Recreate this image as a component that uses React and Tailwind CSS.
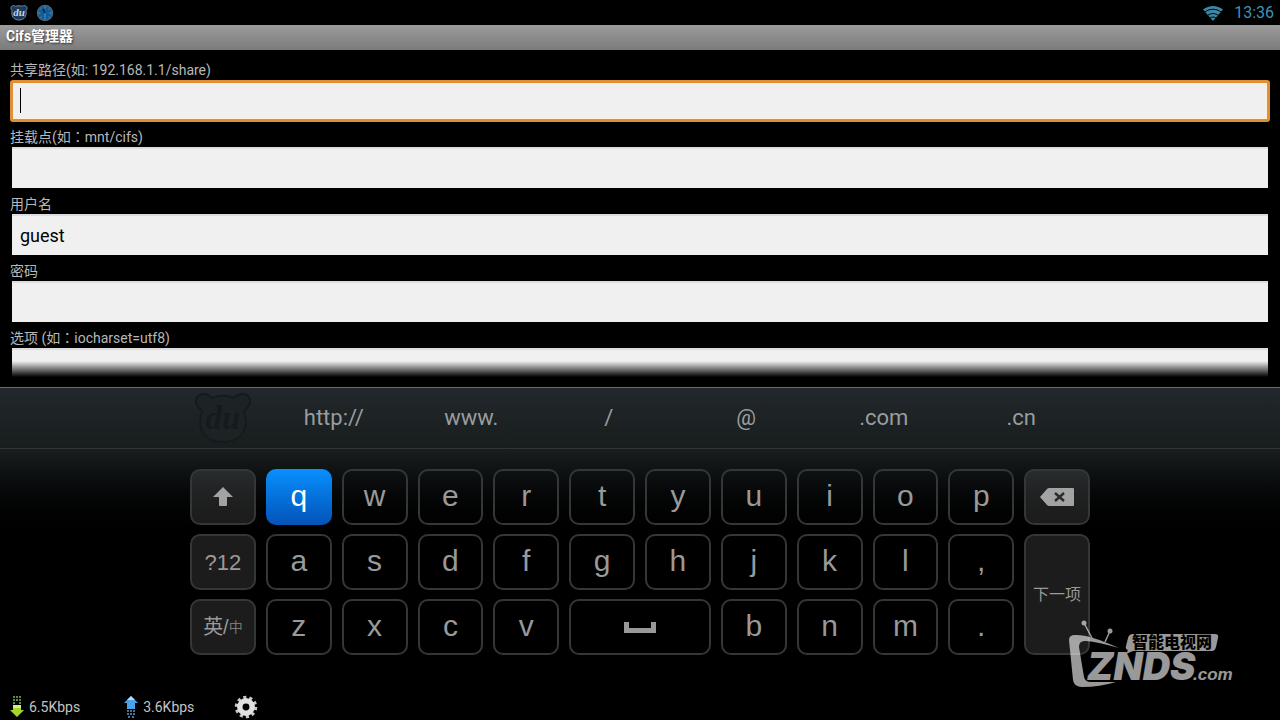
import React, { useState } from 'react';
import clsx from 'clsx';

// full-width colon, centred in its cell as on the device
const Colon = () => <span className="font-['Noto_Sans_CJK_TC',sans-serif] leading-none">：</span>;

const FIELDS = [
  { id: 'share', label: '共享路径(如: 192.168.1.1/share)', value: '' },
  { id: 'mount', label: <>挂载点(如<Colon />mnt/cifs)</>, value: '' },
  { id: 'user', label: '用户名', value: 'guest' },
  { id: 'password', label: '密码', value: '' },
  { id: 'options', label: <>选项 (如<Colon />iocharset=utf8)</>, value: '' },
];

const SHORTCUTS = ['http://', 'www.', '/', '@', '.com', '.cn'];

const ROW_1 = ['q', 'w', 'e', 'r', 't', 'y', 'u', 'i', 'o', 'p'];
const ROW_2 = ['a', 's', 'd', 'f', 'g', 'h', 'j', 'k', 'l', ','];
const ROW_3_LEFT = ['z', 'x', 'c', 'v'];
const ROW_3_RIGHT = ['b', 'n', 'm', '.'];

const BearIcon = () => (
  <svg width="18" height="16" viewBox="0 0 18 16">
    <path
      d="M1 3.5C.5 1 3.5-.2 5.5 1.2 8 .7 10 .7 12.5 1.2 14.5-.2 17.5 1 17 3.5c-.1 1-.6 1.5-1 2 1 5.500-1.500 9.500-7 9.500S1 11 2 5.500C1.500 5 1.100 4.500 1 3.500z"
      fill="#1d3a5c"
      stroke="#6d8ba6"
      strokeWidth="1"
    />
    <text x="9" y="11" textAnchor="middle" fontSize="11" fontWeight="bold" fontStyle="italic" fontFamily="Liberation Serif, serif" fill="#c3d5e4">du</text>
  </svg>
);

const ClockIcon = () => (
  <svg width="18" height="18" viewBox="0 0 18 18">
    <circle cx="9" cy="9" r="7.500" fill="#125c98" stroke="#4d6470" strokeWidth="1.500" />
    <path d="M9 2.500v2M9 13.500v2M2.500 9h2M13.500 9h2M4.500 4.500l1 1M13.500 4.500l-1 1M4.500 13.500l1-1M13.500 13.500l-1-1" stroke="#3fa0dc" strokeWidth="1" />
    <path d="M7 5l2 4.500" fill="none" stroke="#0a2238" strokeWidth="1.500" />
    <path d="M9 9v4" fill="none" stroke="#3fa0dc" strokeWidth="1" />
  </svg>
);

const WifiIcon = () => (
  <svg width="22" height="16" viewBox="0 0 22 16">
    <path d="M1 4.500C7-.3 15-.3 21 4.500L11 16z" fill="#3b87a5" />
    <path d="M2.500 7.200C8 3.300 14 3.300 19.500 7.200M5.500 10.500c3.500-2.600 7.500-2.600 11 0M8 13c2-1.300 4-1.300 6 0" fill="none" stroke="#000" strokeWidth="1" />
  </svg>
);

const DuLogo = () => (
  <svg width="58" height="52" viewBox="0 0 58 52" className="mx-auto">
    <path
      d="M5 16C-1 10 2 2 10 2c4 0 6 2 8 4 7-3 15-3 22 0 2-2 4-4 8-4 8 0 11 8 5 14-2 2-3 2-3 4 6 18-4 30-21 30S2 38 8 20c0-2-1-2-3-4z"
      fill="#1d2325"
      stroke="#151b1c"
      strokeWidth="2"
    />
    <text x="29" y="37" textAnchor="middle" fontSize="33" fontWeight="bold" fontStyle="italic" fontFamily="Liberation Serif, serif" fill="#151b1c">du</text>
  </svg>
);

const DownArrow = () => (
  <svg width="14" height="22" viewBox="0 0 14 22">
    <path d="M3 0h2v2H3zM6 0h2v2H6zM9 0h2v2H9zM3 3h2v2H3zM6 3h2v2H6zM9 3h2v2H9zM3 6h2v2H3zM9 6h2v2H9z" fill="#5f8a3a" />
    <path d="M3 9h8v5h3l-7 7-7-7h3z" fill="#a4d62a" />
    <path d="M3 9h8v3H3z" fill="#d3ec8c" />
  </svg>
);

const UpArrow = () => (
  <svg width="14" height="22" viewBox="0 0 14 22">
    <path d="M7 0l7 7h-3v6H3V7H0z" fill="#4ba3e6" />
    <path d="M7 0l4 4H3z" fill="#b0dcfa" />
    <path d="M3 14h2v2H3zM6 14h2v2H6zM9 14h2v2H9zM3 17h2v2H3zM6 17h2v2H6zM9 17h2v2H9zM4 20h2v2H4zM8 20h2v2H8z" fill="#4a7396" />
  </svg>
);

const GearIcon = () => (
  <svg width="24" height="24" viewBox="0 0 24 24">
    <circle cx="12" cy="12" r="9.500" fill="none" stroke="#c9c9c9" strokeWidth="3.500" strokeDasharray="3 2.970" />
    <circle cx="12" cy="12" r="6.200" fill="none" stroke="#e0e0e0" strokeWidth="5.500" />
  </svg>
);

const Watermark = () => (
  <svg width="170" height="72" viewBox="0 0 170 72" className="pointer-events-none absolute right-11 bottom-[30px] opacity-60">
    <g fill="#fff">
      <path d="M3 22Q3 17 9 17Q22 16 53 30Q32 24 20 23Q13 22 13 29L18 59Q19 64 25 64L50 64Q34 69 16 69Q8 69 7 62Z" />
      <circle cx="18" cy="5" r="2.500" />
      <circle cx="44" cy="13" r="2.500" />
      <path d="M18 5l8 15M44 13l-5 11" stroke="#fff" strokeWidth="1.500" />
      <path d="M67 16h82q4 0 3 4l-2 9q-1 4-4 4H67l-7 3 2-4q-3-1-2-4l2-8q1-4 5-4z" />
      <text x="21" y="62" fontSize="38" fontWeight="900" fontStyle="italic" fontFamily="Inter, Liberation Sans, sans-serif">ZNDS</text>
      <text x="127" y="62" fontSize="17" fontWeight="bold" fontStyle="italic" fontFamily="Liberation Sans, sans-serif">.com</text>
    </g>
    <text x="66" y="30" fontSize="16" fontWeight="900" fontFamily="Noto Sans CJK SC, sans-serif" fill="#000">智能电视网</text>
  </svg>
);

const Key = ({ children, active, dark, className, ...rest }) => (
  <button
    type="button"
    className={clsx(
      'flex items-center justify-center rounded-[10px]',
      active && 'bg-linear-to-b from-[#0a90ff] to-[#0453b8] text-white',
      dark && 'border-2 border-[#353636] bg-[#ffffff1c] text-[#999]',
      !active && !dark && 'border-2 border-[#353636] text-[#999]',
      className || 'pb-1 text-[30px]'
    )}
    {...rest}
  >
    {children}
  </button>
);

const App = () => {
  const [values, setValues] = useState(() => Object.fromEntries(FIELDS.map((f) => [f.id, f.value])));
  const focused = 'share';

  return (
    <div className="relative flex h-screen flex-col overflow-hidden bg-black font-[Roboto,'Noto_Sans_CJK_SC',sans-serif]">
      {/* Status bar */}
      <header className="flex h-[25px] shrink-0 items-center justify-between pr-1.5 pl-2.5">
        <div className="flex items-center gap-2">
          <BearIcon />
          <ClockIcon />
        </div>
        <div className="flex items-center gap-2.5 text-base text-[#3f93b5]">
          <WifiIcon />
          <span>13:36</span>
        </div>
      </header>

      {/* Title */}
      <div className="flex h-[25px] shrink-0 items-center bg-linear-to-b from-[#9c9c9c] to-[#7b7b7b] px-1.5 pb-1">
        <h1 className="text-sm font-bold text-white [text-shadow:1px_1px_2px_#333]">Cifs管理器</h1>
      </div>

      {/* Form */}
      <main className="flex min-h-0 flex-1 flex-col px-2.5 pt-2.5 pb-2.5">
        <form className="relative flex min-h-0 flex-1 flex-col gap-[5px] overflow-hidden">
          {FIELDS.map(({ id, label }) => (
            <div key={id} className="shrink-0">
              <label htmlFor={id} className="block h-5 text-sm leading-5 text-[#b8b8b8]">{label}</label>
              <div
                className={clsx(
                  'relative flex h-[42px]',
                  id === focused ? 'rounded-[3px] border-[3px] border-[#e08f35]' : 'px-0.5 pb-px'
                )}
              >
                <input
                  id={id}
                  type={id === 'password' ? 'password' : 'text'}
                  value={values[id]}
                  onChange={(e) => setValues({ ...values, [id]: e.target.value })}
                  className={clsx(
                    'min-w-0 flex-1 bg-[#f0f0f0] px-2 pt-0.5 text-lg text-black caret-transparent outline-none',
                    id === focused ? 'shadow-[inset_0_0_0_1px_#fff0dc]' : 'shadow-[inset_0_2px_1px_#dcdcdc]'
                  )}
                />
                {id === focused && <span className="absolute top-[5px] left-[7px] h-[25px] w-px bg-black" />}
              </div>
            </div>
          ))}
          {/* scroll fade */}
          <div className="pointer-events-none absolute inset-x-0 bottom-0 h-4 bg-linear-to-b from-transparent to-black" />
        </form>
      </main>

      {/* Keyboard */}
      <section className="shrink-0 border-t border-[#666b6d]">
        <div className="border-b border-[#303738] bg-linear-to-b from-[#22282b] to-[#181d1e]">
          <div className="mx-auto grid h-[60px] max-w-[900px] grid-cols-[66px_1fr] items-center gap-[9px]">
            <DuLogo />
            <div className="grid grid-cols-6 pb-0.5 text-[22px] text-[#999d9e]">
              {SHORTCUTS.map((s) => (
                <button key={s} type="button">{s}</button>
              ))}
            </div>
          </div>
        </div>

        <div className="bg-linear-to-b from-[#1a1e1f] to-black to-[100px] pt-5">
          <div className="mx-auto grid max-w-[900px] auto-rows-[56px] grid-cols-12 gap-x-2.5 gap-y-[9px] font-['Liberation_Sans','Noto_Sans_CJK_SC',sans-serif]">
            <Key dark aria-label="Shift">
              <svg width="20" height="20" viewBox="0 0 20 20" className="mt-1" fill="#a3a3a3">
                <path d="M10 0l10 10h-6v8q0 1-1 1H7q-1 0-1-1v-8H0z" />
              </svg>
            </Key>
            {ROW_1.map((k) => <Key key={k} active={k === 'q'}>{k}</Key>)}
            <Key dark aria-label="Backspace">
              <svg width="34" height="18" viewBox="0 0 34 18" className="mt-1">
                <path d="M0 9l7-8q1-1 2-1h24q1 0 1 1v16q0 1-1 1H9q-1 0-2-1z" fill="#a3a3a3" />
                <path d="M15 5l9 8M24 5l-9 8" stroke="#2b2d2d" strokeWidth="2.500" />
              </svg>
            </Key>

            <Key dark className="text-[22px]">?12</Key>
            {ROW_2.map((k) => <Key key={k}>{k}</Key>)}
            <Key dark className="row-span-2 text-base">下一项</Key>

            <Key dark className="text-xl">英/<span className="text-sm text-[#777]">中</span></Key>
            {ROW_3_LEFT.map((k) => <Key key={k}>{k}</Key>)}
            <Key className="col-span-2" aria-label="Space">
              <svg width="32" height="11" viewBox="0 0 32 11">
                <path d="M0 0h5v6h22V0h5v11H0z" fill="#999" />
              </svg>
            </Key>
            {ROW_3_RIGHT.map((k) => <Key key={k}>{k}</Key>)}
          </div>

          {/* Network speed */}
          <footer className="mt-[39px] flex h-[26px] items-center gap-10 px-2.5 text-sm text-[#c4c4c4]">
            <div className="flex gap-11">
              <span className="flex items-center gap-[5px]"><DownArrow />6.5Kbps</span>
              <span className="flex items-center gap-[5px]"><UpArrow />3.6Kbps</span>
            </div>
            <button type="button" aria-label="Settings"><GearIcon /></button>
          </footer>
        </div>
      </section>

      <Watermark />
    </div>
  );
};

export default App;
